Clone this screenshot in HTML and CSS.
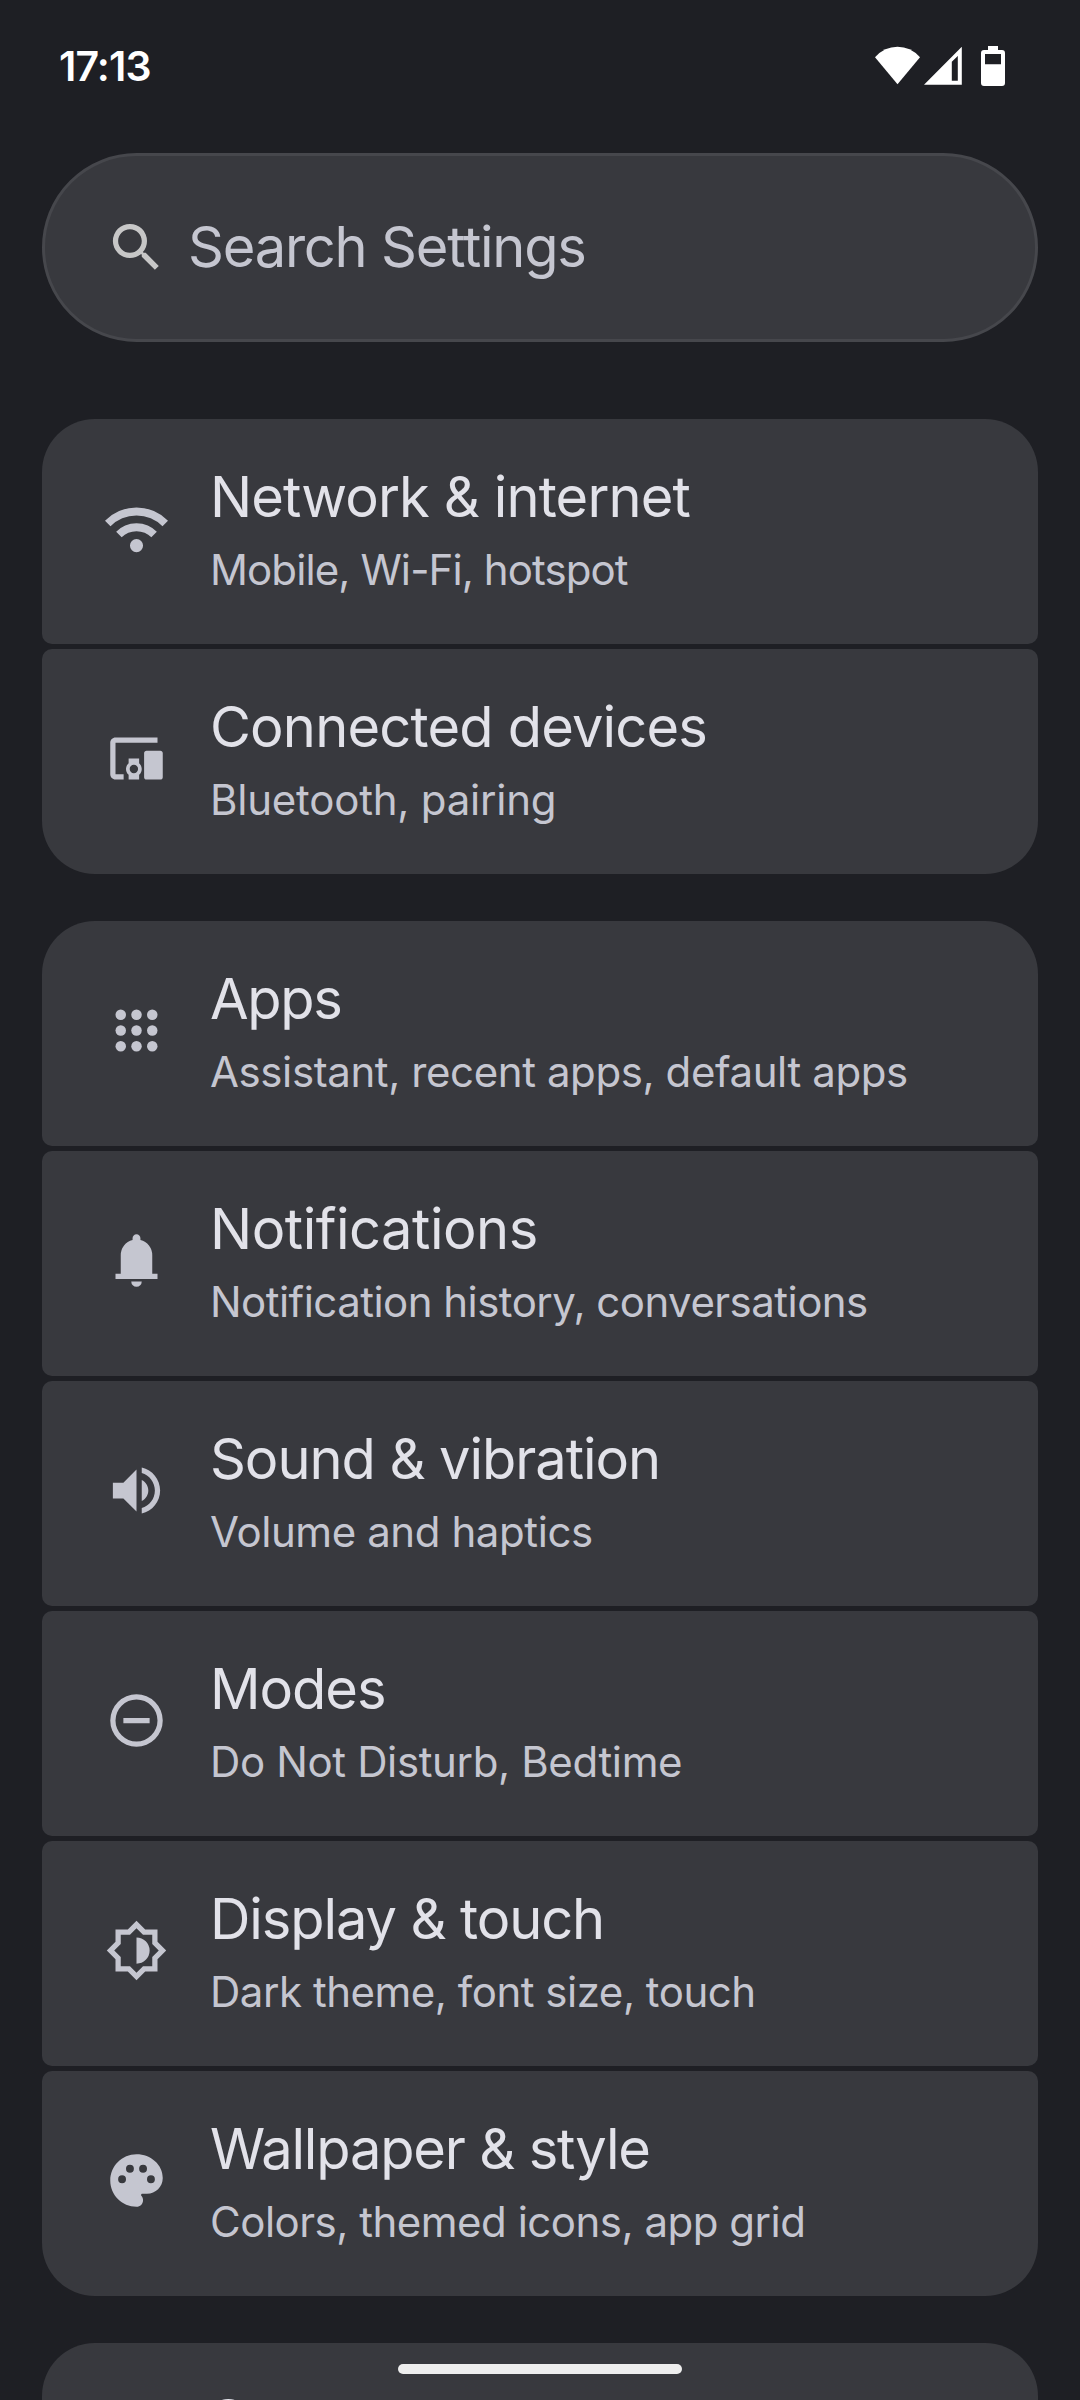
FILE: index.html
```html
<!DOCTYPE html>
<html lang="en">
<head>
<meta charset="utf-8">
<title>Settings</title>
<link rel="stylesheet" href="styles.css">
</head>
<body>
<div class="screen">
  <header class="status-bar">
    <time class="clock">17:13</time>
    <div class="status-icons">
      <svg class="status-wifi" width="45" height="40" viewBox="0 0 45 40"><path d="M0 11.2Q9.500 .8 22.500 .8T45 11.200L22.500 38.200z"/></svg>
      <svg class="status-signal" width="38" height="40" viewBox="0 0 38 40"><path fill-rule="evenodd" d="M0 38.700L37.800 .8V38.700zM27.800 15.700V34.800H33.800V10z"/></svg>
      <svg class="status-battery" width="24" height="40" viewBox="0 0 24 40"><path fill-rule="evenodd" d="M7 0h10v4h4a3 3 0 0 1 3 3v30a3 3 0 0 1-3 3H3a3 3 0 0 1-3-3V7a3 3 0 0 1 3-3h4zM4 8v10.300h16V8z"/></svg>
    </div>
  </header>

  <div class="search">
    <svg class="search-icon" viewBox="0 0 24 24"><path d="M15.500 14h-.79l-.28-.27A6.471 6.471 0 0 0 16 9.500 6.500 6.500 0 1 0 9.500 16c1.610 0 3.090-.59 4.230-1.570l.27.28v.79l5 4.990L20.490 19l-4.990-5zm-6 0C7.010 14 5 11.990 5 9.500S7.010 5 9.500 5 14 7.010 14 9.500 11.990 14 9.500 14z"/></svg>
    <span class="search-label">Search Settings</span>
  </div>

  <main class="groups">
    <section class="group">
      <div class="row network">
        <svg class="icon" viewBox="0 -960 960 960"><path d="M480-120q-42 0-71-29t-29-71q0-42 29-71t71-29q42 0 71 29t29 71q0 42-29 71t-71 29ZM254-346l-84-86q59-59 138.500-93.500T480-560q92 0 171.500 35T790-430l-84 84q-44-44-102-69t-124-25q-66 0-124 25t-102 69ZM84-516 0-600q92-94 215-147t265-53q142 0 265 53t215 147l-84 84q-77-77-178.500-120.500T480-680q-116 0-217.500 43.500T84-516Z"/></svg>
        <div class="text"><div class="title">Network &amp; internet</div><div class="summary">Mobile, Wi-Fi, hotspot</div></div>
      </div>
      <div class="row devices">
        <svg class="icon" viewBox="0 0 24 24"><path d="M4 6h16V4H4c-1.100 0-2 .9-2 2v12c0 1.100.9 2 2 2h3.100v-2H4V6zm9 6H9v1.780c-.61.55-1 1.330-1 2.220s.39 1.670 1 2.220V20h4v-1.780c.61-.55 1-1.340 1-2.220s-.39-1.670-1-2.220V12zm-2 5.600a1.600 1.600 0 1 1 0-3.200 1.600 1.600 0 0 1 0 3.200zM21.100 9h-5.300c-.5 0-.9.4-.9.900v9.200c0 .5.4.9.9.9h5.300c.5 0 .9-.4.9-.9V9.900c0-.5-.4-.9-.9-.9z"/></svg>
        <div class="text"><div class="title">Connected devices</div><div class="summary">Bluetooth, pairing</div></div>
      </div>
    </section>

    <section class="group">
      <div class="row apps">
        <svg class="icon" viewBox="0 0 24 24"><circle cx="6" cy="6" r="2"/><circle cx="12" cy="6" r="2"/><circle cx="18" cy="6" r="2"/><circle cx="6" cy="12" r="2"/><circle cx="12" cy="12" r="2"/><circle cx="18" cy="12" r="2"/><circle cx="6" cy="18" r="2"/><circle cx="12" cy="18" r="2"/><circle cx="18" cy="18" r="2"/></svg>
        <div class="text"><div class="title">Apps</div><div class="summary">Assistant, recent apps, default apps</div></div>
      </div>
      <div class="row notifications">
        <svg class="icon" viewBox="0 0 24 24"><path d="M4 19v-2h2v-7q0-2.075 1.250-3.688T10.500 4.200v-.7q0-.625.438-1.062T12 2q.625 0 1.063.438T13.500 3.500v.7q2 .5 3.250 2.113T18 10v7h2v2Zm8 3q-.825 0-1.412-.587T10 20h4q0 .825-.587 1.413T12 22Z"/></svg>
        <div class="text"><div class="title">Notifications</div><div class="summary">Notification history, conversations</div></div>
      </div>
      <div class="row sound">
        <svg class="icon" viewBox="0 0 24 24"><path d="M3 9v6h4l5 5V4L7 9H3zm13.500 3c0-1.770-1.020-3.290-2.500-4.030v8.050c1.480-.73 2.500-2.250 2.500-4.020zM14 3.230v2.060c2.890.86 5 3.540 5 6.710s-2.110 5.850-5 6.710v2.060c4.010-.91 7-4.490 7-8.770s-2.990-7.860-7-8.770z"/></svg>
        <div class="text"><div class="title">Sound &amp; vibration</div><div class="summary">Volume and haptics</div></div>
      </div>
      <div class="row modes">
        <svg class="icon" viewBox="0 0 24 24"><path fill-rule="evenodd" d="M12 2a10 10 0 1 0 0 20 10 10 0 0 0 0-20zm0 2a8 8 0 1 1 0 16 8 8 0 0 1 0-16zM7 11h10v2H7z"/></svg>
        <div class="text"><div class="title">Modes</div><div class="summary">Do Not Disturb, Bedtime</div></div>
      </div>
      <div class="row display">
        <svg class="icon" viewBox="0 0 24 24"><path fill-rule="evenodd" d="M20 15.310L23.310 12 20 8.690V4h-4.690L12 .69 8.690 4H4v4.690L.69 12 4 15.310V20h4.690L12 23.310 15.310 20H20zM18 14.480V18h-3.520L12 20.480 9.520 18H6v-3.520L3.520 12 6 9.520V6h3.520L12 3.520 14.480 6H18v3.520L20.480 12zM12 7a5 5 0 0 1 0 10z"/></svg>
        <div class="text"><div class="title">Display &amp; touch</div><div class="summary">Dark theme, font size, touch</div></div>
      </div>
      <div class="row wallpaper">
        <svg class="icon" viewBox="0 0 24 24"><path fill-rule="evenodd" d="M12 2C6.490 2 2 6.490 2 12s4.490 10 10 10c1.380 0 2.500-1.120 2.500-2.500 0-.61-.23-1.200-.64-1.670-.08-.1-.13-.21-.13-.33 0-.28.22-.5.5-.5H16c3.310 0 6-2.690 6-6 0-4.960-4.490-9-10-9zM6.500 10a1.500 1.500 0 1 1 0 3 1.500 1.500 0 0 1 0-3zM9.500 6a1.500 1.500 0 1 1 0 3 1.500 1.500 0 0 1 0-3zM14.500 6a1.500 1.500 0 1 1 0 3 1.500 1.500 0 0 1 0-3zM17.500 10a1.500 1.500 0 1 1 0 3 1.500 1.500 0 0 1 0-3z"/></svg>
        <div class="text"><div class="title">Wallpaper &amp; style</div><div class="summary">Colors, themed icons, app grid</div></div>
      </div>
    </section>

    <section class="group">
      <div class="row storage">
        <div class="icon"></div>
        <div class="text"><div class="title">Storage</div></div>
      </div>
    </section>
  </main>

  <div class="nav-pill"></div>
</div>
</body>
</html>
```
FILE: styles.css
```css
* { box-sizing: border-box; }

body {
  margin: 0;
  background: #1e1f24;
  font-family: Inter, "Liberation Sans", sans-serif;
}

svg { display: block; flex: none; }

.screen {
  position: relative;
  width: 1080px;
  height: 2400px;
  overflow: hidden;
  background: #1e1f24;
}

/* Status bar */
.status-bar {
  display: flex;
  justify-content: space-between;
  align-items: flex-start;
  height: 153px;
  padding: 41px 75px 0 59px;
}
.clock {
  color: #fff;
  font-size: 41px;
  font-weight: 600;
  line-height: 50px;
  letter-spacing: -0.9px;
}
.status-icons {
  display: flex;
  padding-top: 5px;
  fill: #fff;
}
.status-signal { margin-left: 4px; }
.status-battery { margin-left: 19px; }

/* Search field */
.search {
  display: flex;
  align-items: center;
  gap: 20px;
  height: 189px;
  margin: 0 42px;
  padding-left: 60px;
  border: 3px solid #46474c;
  border-radius: 95px;
  background: #38393e;
}
.search-icon {
  width: 63px;
  height: 63px;
  fill: #c7c7c7;
}
.search-label {
  padding-bottom: 2px;
  color: #c5c6d0;
  font-size: 56px;
  line-height: 68px;
  letter-spacing: -1.22px;
}

/* Preference groups */
.groups {
  display: flex;
  flex-direction: column;
  gap: 47px;
  padding: 77px 42px 0;
}
.group {
  display: flex;
  flex-direction: column;
  gap: 5px;
}
.row {
  display: flex;
  gap: 42px;
  height: 225px;
  padding-left: 63px;
  border-radius: 10px;
  background: #38393e;
}
.row:first-child {
  border-top-left-radius: 53px;
  border-top-right-radius: 53px;
}
.row:last-child {
  border-bottom-left-radius: 53px;
  border-bottom-right-radius: 53px;
}
.icon {
  width: 63px;
  height: 63px;
  margin-top: 78px;
  fill: #c5c6d0;
}
.text {
  display: flex;
  flex-direction: column;
  gap: 13px;
  padding-top: 44px;
  white-space: nowrap;
}
.title {
  color: #e2e2e9;
  font-size: 56px;
  line-height: 68px;
}
.summary {
  color: #c5c6d0;
  font-size: 42px;
  line-height: 52px;
}

/* Per-row tracking */
.network .title { letter-spacing: -0.88px; }
.network .summary { letter-spacing: -0.9px; }
.devices .title { letter-spacing: -0.81px; }
.devices .summary { letter-spacing: -0.22px; }
.apps .title { letter-spacing: -1.3px; }
.apps .summary { letter-spacing: -0.4px; }
.notifications .title { letter-spacing: -0.48px; }
.notifications .summary { letter-spacing: -0.53px; }
.sound .title { letter-spacing: -1.06px; }
.sound .summary { letter-spacing: -0.42px; }
.modes .title { letter-spacing: -1.03px; }
.modes .summary { letter-spacing: -0.36px; }
.display .title { letter-spacing: -1.1px; }
.display .summary { letter-spacing: -0.47px; }
.wallpaper .title { letter-spacing: -1.17px; }
.wallpaper .summary { letter-spacing: -0.49px; }
.storage .text { padding-top: 43px; }

/* Gesture handle, floats over the list */
.nav-pill {
  position: absolute;
  left: 398px;
  bottom: 26px;
  width: 284px;
  height: 10px;
  border-radius: 5px;
  background: #eee;
}
```
